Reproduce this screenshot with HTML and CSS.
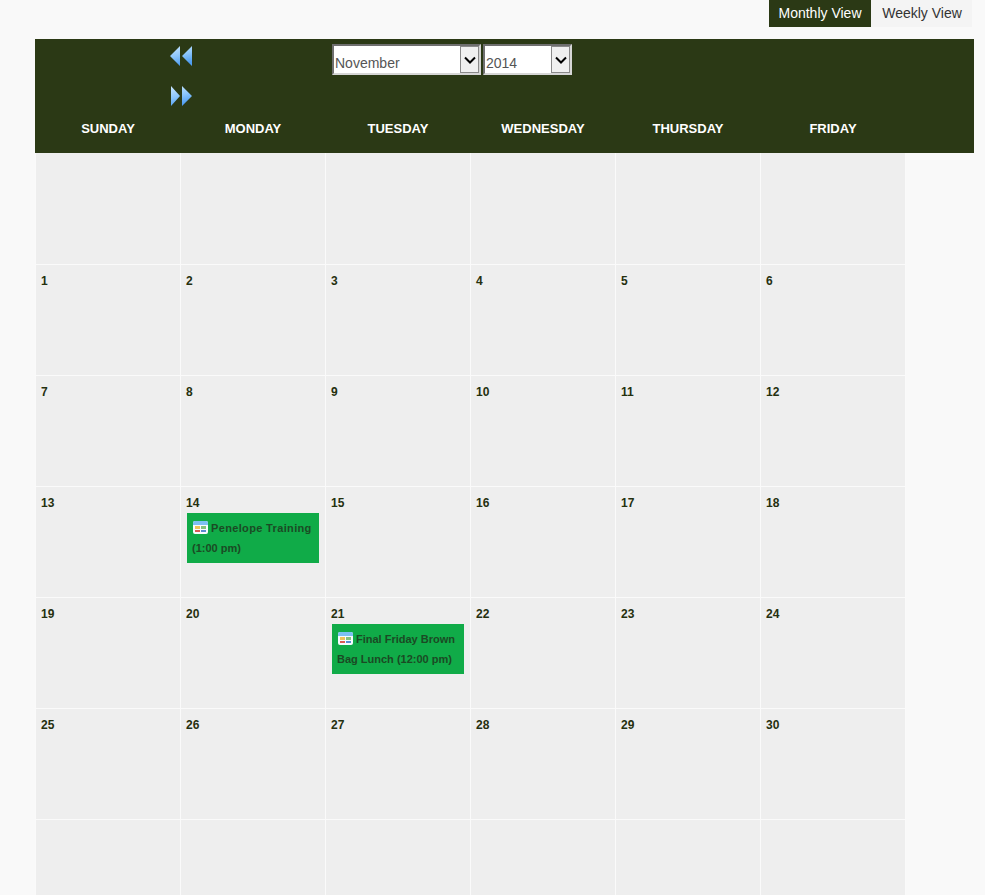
FILE: index.html
```html
<!DOCTYPE html>
<html lang="en">
<head>
<meta charset="utf-8">
<title>Calendar</title>
<link rel="stylesheet" href="styles.css">
</head>
<body>
<div class="page">
  <div class="tabs">
    <span class="tab tab-active">Monthly View</span>
    <span class="tab tab-plain">Weekly View</span>
  </div>
  <div class="head">
    <div class="toolbar">
      <div class="nav">
        <svg class="arrows" width="22" height="20" viewBox="0 0 22 20"><defs><linearGradient id="a" x1="0" y1="0" x2=".3" y2="1"><stop offset="0" stop-color="#cbe7ff"/><stop offset=".55" stop-color="#8cc6fb"/><stop offset="1" stop-color="#4f9df0"/></linearGradient></defs><path d="M0 10 10 0V20Z M12 10 22 0V20Z" fill="url(#a)"/></svg>
        <svg class="arrows" width="22" height="20" viewBox="0 0 22 20"><path d="M1 0 10 10 1 20Z M12 0 22 10 12 20Z" fill="url(#a)"/></svg>
      </div>
      <div class="selects">
        <div class="select select-month"><span class="select-text">November</span><span class="select-btn"><svg width="12" height="8" viewBox="0 0 12 8"><path d="M1 1.500 6 6.500 11 1.500" fill="none" stroke="#000" stroke-width="2"/></svg></span></div>
        <div class="select select-year"><span class="select-text">2014</span><span class="select-btn"><svg width="12" height="8" viewBox="0 0 12 8"><path d="M1 1.500 6 6.500 11 1.500" fill="none" stroke="#000" stroke-width="2"/></svg></span></div>
      </div>
    </div>
    <div class="days">
      <div class="day">SUNDAY</div>
      <div class="day">MONDAY</div>
      <div class="day">TUESDAY</div>
      <div class="day">WEDNESDAY</div>
      <div class="day">THURSDAY</div>
      <div class="day">FRIDAY</div>
    </div>
  </div>
  <div class="grid">
    <div class="cell"></div><div class="cell"></div><div class="cell"></div><div class="cell"></div><div class="cell"></div><div class="cell"></div>
    <div class="cell"><div class="num">1</div></div><div class="cell"><div class="num">2</div></div><div class="cell"><div class="num">3</div></div><div class="cell"><div class="num">4</div></div><div class="cell"><div class="num">5</div></div><div class="cell"><div class="num">6</div></div>
    <div class="cell"><div class="num">7</div></div><div class="cell"><div class="num">8</div></div><div class="cell"><div class="num">9</div></div><div class="cell"><div class="num">10</div></div><div class="cell"><div class="num">11</div></div><div class="cell"><div class="num">12</div></div>
    <div class="cell"><div class="num">13</div></div>
    <div class="cell"><div class="num">14</div>
      <div class="event"><svg class="cal" width="15" height="13" viewBox="0 0 15 13"><rect x="0" y="0" width="15" height="13" rx="2" fill="#f7fbff"/><path d="M0 4V2a2 2 0 0 1 2-2H13a2 2 0 0 1 2 2V4Z" fill="#7cc0f2"/><rect x="2" y="5" width="5" height="3" fill="#edc45a"/><rect x="8" y="5" width="5" height="3" fill="#86c27c"/><rect x="2" y="9" width="5" height="2" fill="#dc5a55"/><rect x="8" y="9" width="5" height="2" fill="#5a8cd0"/></svg><span class="wide">Penelope Training</span> (1:00 pm)</div>
    </div>
    <div class="cell"><div class="num">15</div></div><div class="cell"><div class="num">16</div></div><div class="cell"><div class="num">17</div></div><div class="cell"><div class="num">18</div></div>
    <div class="cell"><div class="num">19</div></div><div class="cell"><div class="num">20</div></div>
    <div class="cell"><div class="num">21</div>
      <div class="event"><svg class="cal" width="15" height="13" viewBox="0 0 15 13"><rect x="0" y="0" width="15" height="13" rx="2" fill="#f7fbff"/><path d="M0 4V2a2 2 0 0 1 2-2H13a2 2 0 0 1 2 2V4Z" fill="#7cc0f2"/><rect x="2" y="5" width="5" height="3" fill="#edc45a"/><rect x="8" y="5" width="5" height="3" fill="#86c27c"/><rect x="2" y="9" width="5" height="2" fill="#dc5a55"/><rect x="8" y="9" width="5" height="2" fill="#5a8cd0"/></svg>Final Friday Brown Bag Lunch (12:00 pm)</div>
    </div>
    <div class="cell"><div class="num">22</div></div><div class="cell"><div class="num">23</div></div><div class="cell"><div class="num">24</div></div>
    <div class="cell"><div class="num">25</div></div><div class="cell"><div class="num">26</div></div><div class="cell"><div class="num">27</div></div><div class="cell"><div class="num">28</div></div><div class="cell"><div class="num">29</div></div><div class="cell"><div class="num">30</div></div>
    <div class="cell"></div><div class="cell"></div><div class="cell"></div><div class="cell"></div><div class="cell"></div><div class="cell"></div>
  </div>
</div>
</body>
</html>
```
FILE: styles.css
```css
html, body {
  margin: 0;
  padding: 0;
  height: 100%;
  overflow: hidden;
}
body {
  background: #f9f9f9;
  font-family: "Liberation Sans", Arial, sans-serif;
}
.page {
  padding-left: 35px;
  width: 939px;
}
.tabs {
  display: flex;
  justify-content: flex-end;
  padding-right: 2px;
  height: 27px;
}
.tab {
  width: 101px;
  height: 27px;
  line-height: 27px;
  text-align: center;
  font-size: 14px;
  color: #333;
  background: #f4f4f4;
}
.tab-plain {
  padding-left: 1px;
  width: 100px;
}
.tab-active {
  width: 102px;
  background: #2b3915;
  color: #fff;
}
.head {
  margin-top: 12px;
  height: 114px;
  background: #2b3915;
}
.toolbar {
  display: flex;
  height: 77px;
  padding-left: 135px;
}
.nav {
  display: flex;
  flex-direction: column;
  gap: 20px;
  width: 22px;
  padding-top: 7px;
}
.arrows {
  display: block;
}
.selects {
  display: flex;
  gap: 2px;
  margin-left: 140px;
  padding-top: 5px;
}
.select {
  box-sizing: border-box;
  display: flex;
  align-items: flex-end;
  justify-content: space-between;
  height: 31px;
  background: #fff;
  border: 2px solid #fff;
  border-top-color: #6f6f6f;
  border-left-color: #6f6f6f;
  border-right-color: #d6d6d6;
  border-bottom-color: #d6d6d6;
}
.select-month {
  width: 149px;
}
.select-year {
  width: 89px;
}
.select-text {
  padding-left: 1px;
  font-size: 14px;
  line-height: 20px;
  color: #555;
}
.select-btn {
  box-sizing: border-box;
  display: flex;
  align-items: center;
  justify-content: center;
  align-self: flex-start;
  width: 19px;
  height: 27px;
  background: #f0f0f0;
  border: 1px solid #8a8a8a;
}
.days {
  display: grid;
  grid-template-columns: repeat(6, 145px);
  height: 37px;
}
.day {
  padding-left: 1px;
  line-height: 25px;
  text-align: center;
  font-size: 13px;
  font-weight: bold;
  color: #fff;
}
.grid {
  display: grid;
  grid-template-columns: repeat(6, 145px);
  grid-auto-rows: 111px;
}
.cell {
  box-sizing: border-box;
  background: #eee;
  border-left: 1px solid #fafafa;
  border-top: 1px solid #fafafa;
  padding: 8px 0 0 5px;
}
.cell:nth-child(-n+6) {
  border-top: 0;
}
.cell:nth-child(6n) {
  width: 146px;
  border-right: 1px solid #fafafa;
}
.num {
  font-size: 12px;
  font-weight: bold;
  line-height: 16px;
  color: #25300f;
}
.event {
  box-sizing: border-box;
  width: 132px;
  height: 50px;
  margin-top: 2px;
  margin-left: 1px;
  padding: 5px;
  background: #10ab48;
  color: #1b4a24;
  font-size: 11px;
  font-weight: bold;
  line-height: 20px;
}
.cal {
  vertical-align: -2px;
  margin-left: 1px;
  margin-right: 3px;
}
.wide {
  letter-spacing: 0.35px;
}
```
